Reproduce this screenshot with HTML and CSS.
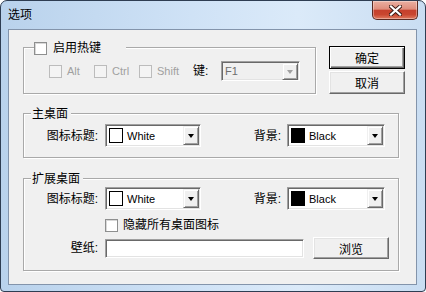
FILE: index.html
```html
<!DOCTYPE html>
<html lang="zh-CN">
<head>
  <meta charset="UTF-8" />
  <title>选项</title>
  <link rel="stylesheet" href="styles.css">
</head>
<body>
  <div class="window">
    <div class="titlebar">
      <span class="title">选项</span>
      <div class="close">
        <svg width="13" height="11" viewBox="0 0 13 11">
          <path d="M2 1.5 L11 9.5 M11 1.5 L2 9.5" stroke="#3b1a14" stroke-width="4" stroke-linecap="square" />
          <path d="M2 1.5 L11 9.5 M11 1.5 L2 9.5" stroke="#ffffff" stroke-width="2.2" stroke-linecap="square" />
        </svg>
      </div>
    </div>

    <div class="client">
      <!-- 热键 + 按钮 -->
      <div class="top-row">
        <div class="group hotkey">
          <div class="legend legend-check"><span class="cb"></span>启用热键</div>
          <div class="row hk-row">
            <span class="chk disabled w45"><span class="cb"></span>Alt</span>
            <span class="chk disabled w45"><span class="cb"></span>Ctrl</span>
            <span class="chk disabled w54"><span class="cb"></span>Shift</span>
            <span class="key-lbl">键:</span>
            <div class="combo key-combo disabled">
              <span class="combo-text">F1</span>
              <span class="arrow"></span>
            </div>
          </div>
        </div>
        <div class="buttons">
          <button class="btn default">确定</button>
          <button class="btn">取消</button>
        </div>
      </div>

      <!-- 主桌面 -->
      <div class="group main">
        <div class="legend">主桌面</div>
        <div class="row color-row">
          <span class="lbl">图标标题:</span>
          <div class="combo combo1">
            <span class="swatch white"></span><span class="combo-text">White</span>
            <span class="arrow"></span>
          </div>
          <span class="lbl2">背景:</span>
          <div class="combo combo2">
            <span class="swatch black"></span><span class="combo-text">Black</span>
            <span class="arrow"></span>
          </div>
        </div>
      </div>

      <!-- 扩展桌面 -->
      <div class="group ext">
        <div class="legend">扩展桌面</div>
        <div class="row color-row ext-row">
          <span class="lbl">图标标题:</span>
          <div class="combo combo1">
            <span class="swatch white"></span><span class="combo-text">White</span>
            <span class="arrow"></span>
          </div>
          <span class="lbl2">背景:</span>
          <div class="combo combo2">
            <span class="swatch black"></span><span class="combo-text">Black</span>
            <span class="arrow"></span>
          </div>
        </div>
        <div class="row hide-row">
          <span class="chk"><span class="cb"></span>隐藏所有桌面图标</span>
        </div>
        <div class="row wall-row">
          <span class="lbl">壁纸:</span>
          <div class="input"></div>
          <button class="btn browse">浏览</button>
        </div>
      </div>
    </div>
  </div>
</body>
</html>
```

FILE: styles.css
```css
* {
  box-sizing: border-box;
}
body {
  margin: 0;
  background: #ffffff;
  font-family: "Liberation Sans", "Noto Sans CJK SC", sans-serif;
  font-size: 12px;
  line-height: 14px;
  color: #000000;
}
.window {
  width: 426px;
  height: 292px;
  border: 1px solid #2e3d52;
  border-radius: 7px 7px 4px 4px;
  background: linear-gradient(to right, #b9d2ec 0%, #cfe2f6 45%, #dbeaf9 70%, #c9ddf2 100%);
  overflow: hidden;
}
.titlebar {
  height: 28px;
  display: flex;
  align-items: flex-start;
}
.title {
  padding: 7px 0 0 7px;
  font-size: 12px;
  line-height: 14px;
  color: #000000;
}
.close {
  margin: 0 7px 0 auto;
  width: 46px;
  height: 19px;
  border: 1px solid #5a2a22;
  border-top: none;
  border-radius: 0 0 5px 5px;
  background: linear-gradient(#eab0a2 0%, #df8d7c 45%, #c6402c 52%, #c9462f 75%, #e07a5f 100%);
  box-shadow: inset 0 0 0 1px rgba(255, 255, 255, 0.35);
  display: flex;
  align-items: center;
  justify-content: center;
}
.client {
  margin: 0 8px 0 7px;
  height: 256px;
  border: 1px solid #8394ab;
  background: #f0f0f0;
}

/* groups */
.group {
  border: 1px solid #a9a9a9;
  box-shadow: inset 1px 1px 0 #ffffff, 1px 1px 0 #ffffff;
  margin-left: 14px;
}
.legend {
  display: flex;
  align-items: center;
  width: max-content;
  height: 14px;
  line-height: 14px;
  margin-top: -7px;
  margin-left: 7px;
  padding: 0 3px 0 1px;
  background: #f0f0f0;
}
.legend-check {
  margin-left: 10px;
  padding: 0;
  width: 92px;
}
.legend-check .cb {
  margin-right: 6px;
}
.row {
  display: flex;
  align-items: center;
}

.top-row {
  display: flex;
  align-items: flex-start;
  margin-top: 16px;
}
.hotkey {
  width: 293px;
  height: 47px;
  margin-top: 1px;
}
.hk-row {
  margin-top: 6px;
  height: 20px;
  padding-left: 25px;
}
.buttons {
  margin-left: 13px;
  display: flex;
  flex-direction: column;
  gap: 2px;
}
.main {
  width: 376px;
  height: 45px;
  margin-top: 19px;
}
.ext {
  width: 376px;
  height: 93px;
  margin-top: 20px;
}
.color-row {
  margin-top: 3px;
  height: 23px;
}
.ext-row {
  margin-top: 1px;
}
.hide-row {
  margin-top: 8px;
  height: 14px;
  padding-left: 81px;
}
.wall-row {
  margin-top: 5px;
  height: 22px;
}

/* checkboxes */
.cb {
  display: inline-block;
  width: 13px;
  height: 13px;
  border: 1px solid #8e8f8f;
  background: #ffffff;
  box-shadow: inset 1px 1px 0 #d8d8d8;
  flex: none;
}
.chk {
  display: inline-flex;
  align-items: center;
  font-size: 12px;
}
.chk .cb {
  margin-right: 5px;
}
.chk.disabled {
  color: #a0a0a0;
  font-size: 11px;
}
.chk.disabled .cb {
  border-color: #bcbcbc;
  background: #f4f4f4;
  box-shadow: none;
}
.w45 {
  width: 45px;
}
.w54 {
  width: 54px;
}
.key-lbl {
  width: 28px;
}

/* labels */
.lbl {
  width: 74px;
  margin-right: 7px;
  text-align: right;
}
.lbl2 {
  width: 80px;
  margin-right: 6px;
  text-align: right;
}

/* combos */
.combo {
  display: flex;
  align-items: center;
  height: 23px;
  background: #ffffff;
  border: 1px solid;
  border-color: #a0a0a0 #ffffff #ffffff #a0a0a0;
  box-shadow: inset 1px 1px 0 #696969, inset -1px -1px 0 #e3e3e3;
  font-size: 11px;
}
.combo1 {
  width: 96px;
}
.combo2 {
  width: 98px;
}
.key-combo {
  width: 79px;
  height: 20px;
}
.combo.disabled {
  background: #f0f0f0;
  color: #6d6d6d;
}
.combo.disabled .combo-text {
  margin-left: 3px;
}
.swatch {
  width: 14px;
  height: 15px;
  margin-left: 3px;
  border: 1px solid #000000;
  flex: none;
}
.swatch.white {
  background: #ffffff;
}
.swatch.black {
  background: #000000;
}
.combo-text {
  margin-left: 4px;
}
.arrow {
  margin: 0 1px 0 auto;
  width: 16px;
  height: 19px;
  background: #f0f0f0;
  border: 1px solid;
  border-color: #f0f0f0 #696969 #696969 #f0f0f0;
  box-shadow: inset 1px 1px 0 #ffffff, inset -1px -1px 0 #a0a0a0;
  position: relative;
  flex: none;
}
.arrow::after {
  content: "";
  position: absolute;
  left: 4px;
  top: 7px;
  border-left: 3.5px solid transparent;
  border-right: 3.5px solid transparent;
  border-top: 4px solid #000000;
}
.key-combo .arrow {
  height: 17px;
}
.key-combo .arrow::after {
  top: 6px;
  border-top-color: #a0a0a0;
}

/* buttons */
.btn {
  width: 76px;
  height: 23px;
  padding: 0;
  font-family: "Liberation Sans", "Noto Sans CJK SC", sans-serif;
  font-size: 12px;
  color: #000000;
  background: #f0f0f0;
  border: 1px solid;
  border-color: #ffffff #696969 #696969 #ffffff;
  box-shadow: inset -1px -1px 0 #a0a0a0, inset 1px 1px 0 #e3e3e3;
}
.btn.default {
  border: 1px solid #000000;
  box-shadow: inset 1px 1px 0 #ffffff, inset -1px -1px 0 #696969, inset -2px -2px 0 #a0a0a0;
}
.input {
  width: 199px;
  height: 19px;
  background: #ffffff;
  border: 1px solid;
  border-color: #a0a0a0 #ffffff #ffffff #a0a0a0;
  box-shadow: inset 1px 1px 0 #696969, inset -1px -1px 0 #e3e3e3;
}
.browse {
  margin-left: 9px;
  height: 22px;
}
```
